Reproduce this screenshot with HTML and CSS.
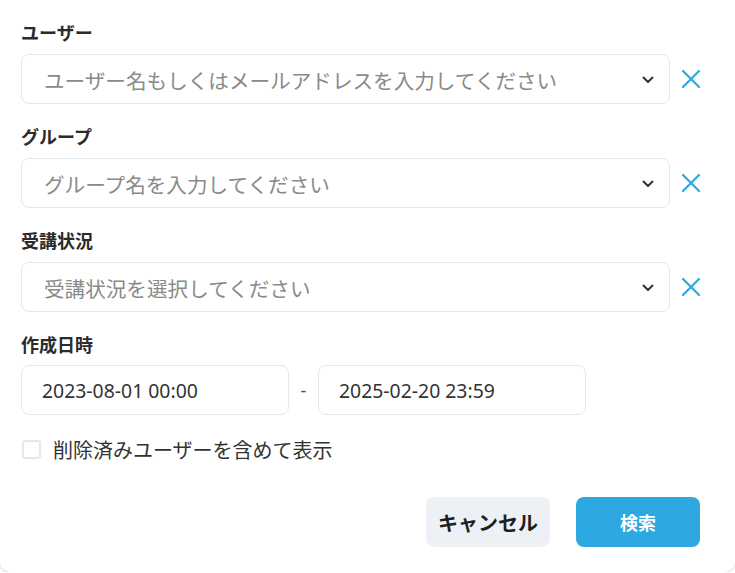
FILE: index.html
```html
<!DOCTYPE html>
<html lang="ja">
<head>
<meta charset="utf-8">
<link rel="stylesheet" href="styles.css">
</head>
<body>
<div class="card">
  <div class="field">
    <div class="label">ユーザー</div>
    <div class="row">
      <div class="select">
        <span class="placeholder">ユーザー名もしくはメールアドレスを入力してください</span>
        <svg class="chev" width="12" height="8" viewBox="0 0 12 8"><path d="M1.5 1.5 L6 6 L10.5 1.5" fill="none" stroke="#333" stroke-width="2" stroke-linecap="round" stroke-linejoin="round"/></svg>
      </div>
      <svg class="clear" width="18" height="18" viewBox="0 0 18 18"><path d="M1 1 L17 17 M17 1 L1 17" stroke="#2ea8e0" stroke-width="2.2" stroke-linecap="round"/></svg>
    </div>
  </div>
  <div class="field">
    <div class="label">グループ</div>
    <div class="row">
      <div class="select">
        <span class="placeholder">グループ名を入力してください</span>
        <svg class="chev" width="12" height="8" viewBox="0 0 12 8"><path d="M1.5 1.5 L6 6 L10.5 1.5" fill="none" stroke="#333" stroke-width="2" stroke-linecap="round" stroke-linejoin="round"/></svg>
      </div>
      <svg class="clear" width="18" height="18" viewBox="0 0 18 18"><path d="M1 1 L17 17 M17 1 L1 17" stroke="#2ea8e0" stroke-width="2.2" stroke-linecap="round"/></svg>
    </div>
  </div>
  <div class="field">
    <div class="label">受講状況</div>
    <div class="row">
      <div class="select">
        <span class="placeholder">受講状況を選択してください</span>
        <svg class="chev" width="12" height="8" viewBox="0 0 12 8"><path d="M1.5 1.5 L6 6 L10.5 1.5" fill="none" stroke="#333" stroke-width="2" stroke-linecap="round" stroke-linejoin="round"/></svg>
      </div>
      <svg class="clear" width="18" height="18" viewBox="0 0 18 18"><path d="M1 1 L17 17 M17 1 L1 17" stroke="#2ea8e0" stroke-width="2.2" stroke-linecap="round"/></svg>
    </div>
  </div>
  <div class="field">
    <div class="label">作成日時</div>
    <div class="dates">
      <div class="date">2023-08-01 00:00</div>
      <span class="dash">-</span>
      <div class="date">2025-02-20 23:59</div>
    </div>
  </div>
  <label class="check">
    <span class="box"></span>
    <span class="check-text">削除済みユーザーを含めて表示</span>
  </label>
  <div class="actions">
    <button class="btn cancel">キャンセル</button>
    <button class="btn search">検索</button>
  </div>
</div>
</body>
</html>
```

FILE: styles.css
```css
html, body {
  margin: 0;
  padding: 0;
  background: #ffffff;
}
body {
  font-family: "Noto Sans", "Noto Sans CJK JP", sans-serif;
  color: #333;
}
.card {
  box-sizing: border-box;
  width: 735px;
  height: 572px;
  background: #fff;
  border-radius: 0 0 10px 10px;
  box-shadow: 0 1px 2px rgba(0,0,0,0.18);
  padding: 20px 35px 0 21px;
}
.field {
  margin-bottom: 20px;
}
.label {
  font-size: 18px;
  font-weight: 700;
  line-height: 27px;
  color: #2b2b2b;
  margin-bottom: 7px;
}
.row {
  display: flex;
  align-items: center;
}
.select {
  box-sizing: border-box;
  flex: 1;
  height: 50px;
  border: 1px solid #e2e8f0;
  border-radius: 8px;
  display: flex;
  align-items: center;
  padding: 1px 15px 0 22px;
}
.placeholder {
  flex: 1;
  font-size: 20.6px;
  color: #8a8a8a;
  white-space: nowrap;
}
.chev {
  display: block;
}
.clear {
  display: block;
  margin-left: 12px;
}
.dates {
  display: flex;
  align-items: center;
  margin-top: -1px;
}
.date {
  box-sizing: border-box;
  width: 268px;
  height: 50px;
  border: 1px solid #e2e8f0;
  border-radius: 8px;
  display: flex;
  align-items: center;
  padding-left: 20px;
  font-size: 19.4px;
  color: #333;
}
.dash {
  width: 29px;
  text-align: center;
  font-size: 18px;
  color: #555555;
}
.check {
  display: flex;
  align-items: center;
  margin-top: 8px;
}
.box {
  box-sizing: border-box;
  width: 19px;
  height: 19px;
  border: 2px solid #e2e8f0;
  border-radius: 3px;
  margin-left: 1px;
  margin-right: 12px;
}
.check-text {
  font-size: 20px;
  color: #333;
}
.actions {
  display: flex;
  justify-content: flex-end;
  gap: 26px;
  margin-top: 33px;
}
.btn {
  width: 124px;
  height: 50px;
  border: none;
  border-radius: 8px;
  font-family: "Noto Sans", "Noto Sans CJK JP", sans-serif;
  font-weight: 700;
  padding: 0;
}
.cancel {
  background: #edf1f5;
  color: #1f1f1f;
  font-size: 20px;
}
.search {
  background: #2ea8e0;
  color: #fff;
  font-size: 18px;
}
```
